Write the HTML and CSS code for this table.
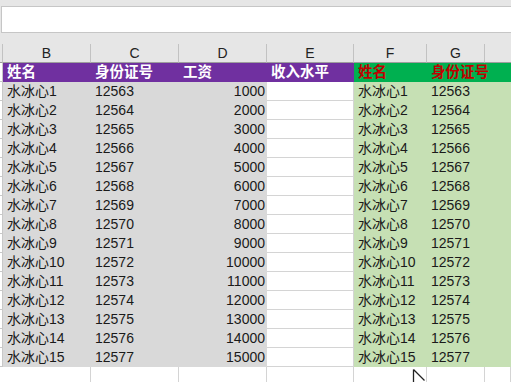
FILE: index.html
```html
<!DOCTYPE html>
<html>
<head>
<meta charset="utf-8">
<link rel="stylesheet" href="styles.css">
</head>
<body>
<div class="top"><div class="fbox"></div></div>
<div class="sheet" id="sheet">
  <div class="ch rh"></div><div class="ch">B</div><div class="ch">C</div><div class="ch">D</div><div class="ch">E</div><div class="ch">F</div><div class="ch">G</div><div class="ch last"></div>

  <div class="rh"></div>
  <div class="c hp">姓名</div><div class="c hp">身份证号</div><div class="c hp">工资</div><div class="c hp">收入水平</div>
  <div class="c hg">姓名</div><div class="c hg over">身份证号</div><div class="c hg"></div>
</div>
<svg class="cursor" width="14" height="16" viewBox="0 0 14 16"><path d="M1.5 1.5 L1.5 14 M1.5 1.5 L12.5 12.5" fill="none" stroke="#222" stroke-width="1.3"/></svg>
<script>
const s = document.getElementById('sheet');
let h = '';
for (let i = 1; i <= 15; i++) {
  h += '<div class="rh"></div>' +
    '<div class="c g">水冰心' + i + '</div>' +
    '<div class="c g">' + (12562 + i) + '</div>' +
    '<div class="c g num">' + (i * 1000) + '</div>' +
    '<div class="c w"></div>' +
    '<div class="c lg">水冰心' + i + '</div>' +
    '<div class="c lg">' + (12562 + i) + '</div>' +
    '<div class="c lg"></div>';
}
for (let k = 0; k < 8; k++) h += '<div class="c ' + (k === 0 ? 'rh' : 'blank') + '"></div>';
s.insertAdjacentHTML('beforeend', h);
</script>
</body>
</html>
```
FILE: styles.css
```css
html, body { margin: 0; padding: 0; background: #fff; }
body { width: 511px; height: 382px; overflow: hidden; position: relative;
  font-family: "Liberation Sans", "Noto Sans CJK SC", sans-serif; font-size: 14px; color: #1a1a1a; }
.top { height: 44px; background: #e6e6e6; padding-top: 6px; box-sizing: border-box; }
.fbox { margin-left: 1px; height: 27px; background: #fff; border: 1px solid #c6c6c6; border-right: none; box-sizing: border-box; }
.sheet { display: grid; grid-template-columns: 3px 88px 88px 88px 87px 73px 58px 26px; grid-auto-rows: 19px; }
.sheet > div { box-sizing: border-box; white-space: nowrap; overflow: hidden; }
.ch { background: #e6e6e6; border-right: 1px solid #c2c2c2; border-bottom: 1px solid #9e9e9e; text-align: center; line-height: 18px; color: #222; font-size: 14px; }
.ch.last { border-right: none; }
.rh { background: #fff; border-bottom: 1px solid #c8c8c8; border-right: 1px solid #c8c8c8; }
.ch.rh { background: #e6e6e6; border-right: 1px solid #c2c2c2; border-bottom: 1px solid #9e9e9e; }
.c { padding: 0 4px; line-height: 19px; }
.hp { background: #7030a0; color: #fff; font-weight: bold; font-size: 14.5px; }
.hg { background: #00b050; color: #c00000; font-weight: bold; font-size: 14.5px; }
.sheet > .over { overflow: visible; position: relative; z-index: 1; }
.g { background: #d9d9d9; }
.num { text-align: right; padding-right: 2px; }
.w { background: #fff; border-right: 1px solid #d4d4d4; border-bottom: 1px solid #d4d4d4; }
.lg { background: #c6e0b4; }
.blank { background: #fff; border-right: 1px solid #d4d4d4; border-bottom: 1px solid #d4d4d4; }
.cursor { position: absolute; left: 412px; top: 368px; }
```
